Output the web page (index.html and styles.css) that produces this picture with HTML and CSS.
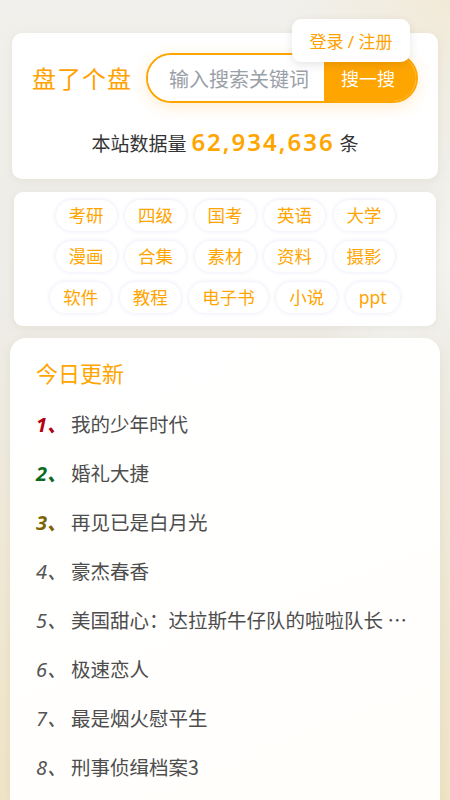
FILE: index.html
```html
<!DOCTYPE html>
<html lang="zh-CN">
<head>
<meta charset="utf-8">
<title>盘了个盘</title>
<link rel="stylesheet" href="styles.css">
</head>
<body>
<div class="page">
  <section class="card head">
    <a class="login">登录 / 注册</a>
    <div class="search-row">
      <div class="logo">盘了个盘</div>
      <div class="search">
        <span class="placeholder">输入搜索关键词</span>
        <span class="btn">搜一搜</span>
      </div>
    </div>
    <div class="stats">本站数据量 <span class="num">62,934,636</span> 条</div>
  </section>

  <section class="card tags">
    <span class="tag">考研</span><span class="tag">四级</span><span class="tag">国考</span><span class="tag">英语</span><span class="tag">大学</span>
    <span class="tag">漫画</span><span class="tag">合集</span><span class="tag">素材</span><span class="tag">资料</span><span class="tag">摄影</span>
    <span class="tag">软件</span><span class="tag">教程</span><span class="tag">电子书</span><span class="tag">小说</span><span class="tag">ppt</span>
  </section>

  <section class="card today">
    <h2 class="title">今日更新</h2>
    <ul class="list">
      <li><span class="idx top1">1、</span><span class="name">我的少年时代</span></li>
      <li><span class="idx top2">2、</span><span class="name">婚礼大捷</span></li>
      <li><span class="idx top3">3、</span><span class="name">再见已是白月光</span></li>
      <li><span class="idx">4、</span><span class="name">豪杰春香</span></li>
      <li><span class="idx">5、</span><span class="name">美国甜心：达拉斯牛仔队的啦啦队长 第二季</span></li>
      <li><span class="idx">6、</span><span class="name">极速恋人</span></li>
      <li><span class="idx">7、</span><span class="name">最是烟火慰平生</span></li>
      <li><span class="idx">8、</span><span class="name">刑事侦缉档案3</span></li>
    </ul>
  </section>
</div>
</body>
</html>
```

FILE: styles.css
```css
* { box-sizing: border-box; }
html, body { margin: 0; padding: 0; }
body {
  width: 450px;
  height: 800px;
  overflow: hidden;
  font-family: "Noto Sans", "Noto Sans CJK SC", sans-serif;
  background:
    linear-gradient(125deg, rgba(255,255,255,0) 55%, rgba(255,255,255,0.35) 62%, rgba(255,255,255,0) 70%),
    radial-gradient(circle at 100% 0%, #f2ead8 0, rgba(242,234,216,0) 160px),
    linear-gradient(180deg, #f1f0ec 0%, #eeece6 40%, #f0e4c6 100%);
}
.page {
  display: flex;
  flex-direction: column;
  padding-top: 33px;
}
.card {
  background: #fff;
  border-radius: 10px;
  box-shadow: 0 2px 10px rgba(160, 150, 120, 0.12);
}
.head {
  position: relative;
  margin: 0 12px;
  padding: 20px 20px 20px 20px;
}
.login {
  position: absolute;
  top: -14px;
  right: 28px;
  width: 118px;
  height: 43px;
  display: flex;
  align-items: center;
  justify-content: center;
  background: #fff;
  border-radius: 9px;
  box-shadow: 0 3px 10px rgba(0, 0, 0, 0.1);
  color: #ffa200;
  font-size: 17px;
  z-index: 2;
}
.search-row {
  display: flex;
  align-items: center;
  gap: 14px;
}
.logo {
  color: #ffa200;
  font-size: 24px;
  letter-spacing: 1px;
  white-space: nowrap;
  padding-bottom: 2px;
}
.search {
  flex: 1;
  height: 50px;
  display: flex;
  border: 2px solid #ffa500;
  border-radius: 25px;
  overflow: hidden;
  box-shadow: 0 4px 16px rgba(255, 170, 40, 0.22);
}
.placeholder {
  flex: 1;
  display: flex;
  align-items: center;
  padding-left: 21px;
  color: #9aa0a8;
  font-size: 20px;
  white-space: nowrap;
  background: #fff;
}
.btn {
  width: 92px;
  display: flex;
  align-items: center;
  justify-content: center;
  background: #ffa500;
  color: #fff;
  font-size: 18px;
  padding-right: 4px;
}
.stats {
  margin-top: 24px;
  text-align: center;
  font-size: 19px;
  line-height: 30px;
  color: #333;
}
.num {
  color: #ffa500;
  font-size: 24px;
  font-weight: 600;
  letter-spacing: 2px;
}
.tags {
  margin: 13px 14px 0;
  padding: 8px 10px 13px;
  display: flex;
  flex-wrap: wrap;
  justify-content: center;
  column-gap: 8.5px;
  row-gap: 10px;
  border-radius: 9px;
}
.tag {
  height: 31px;
  line-height: 31px;
  padding: 0 13px;
  border-radius: 16px;
  background: #fff;
  color: #ffa500;
  font-size: 17.5px;
  box-shadow: 0 0 4px rgba(200, 200, 240, 0.45);
}
.today {
  margin: 12px 10px 0;
  padding: 20px 30px 20px 26px;
  border-radius: 16px;
  background: linear-gradient(160deg, #ffffff 0%, #fffefb 100%);
  min-height: 500px;
}
.title {
  margin: 0;
  font-weight: normal;
  color: #ffa500;
  font-size: 22px;
  line-height: 30px;
}
.list {
  list-style: none;
  margin: 11px 0 0;
  padding: 0;
}
.list li {
  display: flex;
  align-items: center;
  height: 49px;
  font-size: 19.5px;
  color: #4d4d4d;
}
.idx {
  width: 35px;
  flex: none;
  font-style: italic;
  color: #555;
  font-size: 20px;
}
.idx.top1 { color: #b30012; font-weight: 700; }
.idx.top2 { color: #0b6a1e; font-weight: 700; }
.idx.top3 { color: #7d6400; font-weight: 700; }
.name {
  flex: 1;
  min-width: 0;
  font-family: "Noto Sans CJK SC", "Noto Sans", sans-serif;
  white-space: nowrap;
  overflow: hidden;
  text-overflow: ellipsis;
}
```
